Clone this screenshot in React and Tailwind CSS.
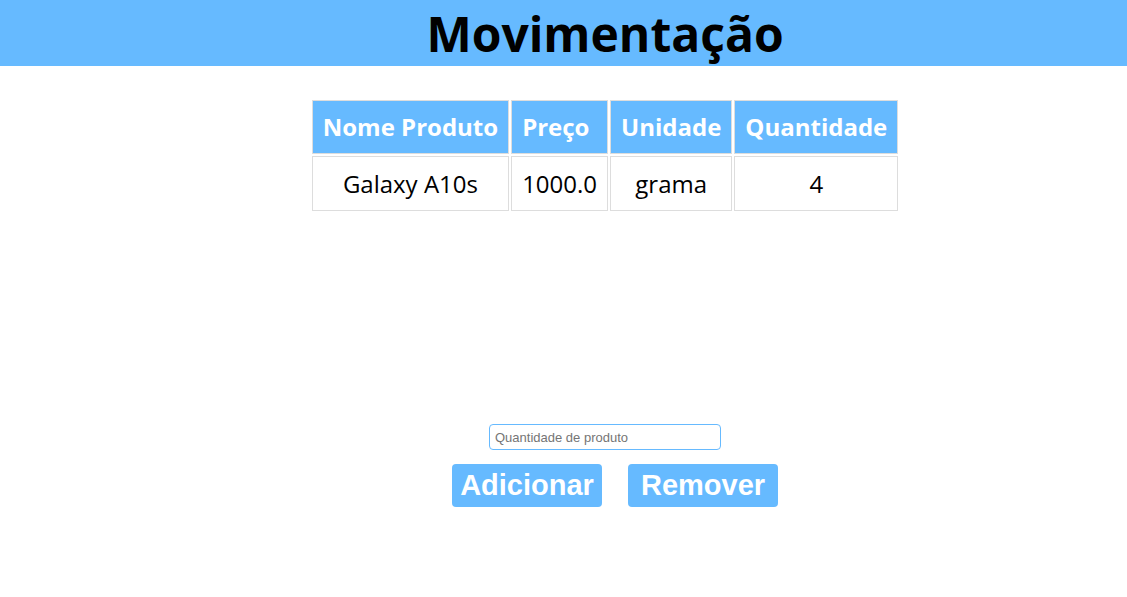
import React from 'react';

const rows = [{ nome: 'Galaxy A10s', preco: '1000.0', unidade: 'grama', quantidade: '4' }];

const App = () => {
  return (
    <div className="min-h-[597px] bg-white font-['Open_Sans',sans-serif]">
      <header className="h-[66px] bg-[#66baff] flex items-center justify-center pl-[83px]">
        <h1 className="text-[48px] font-bold text-black leading-none mt-[2px]">Movimentação</h1>
      </header>

      <div className="flex justify-center pl-[83px] mt-[32px]">
        <table className="border-separate border-spacing-[2px] text-[24px]">
          <thead>
            <tr>
              {['Nome Produto', 'Preço', 'Unidade', 'Quantidade'].map((h) => (
                <th key={h} className="bg-[#66baff] text-white font-bold text-left border border-[#dddddd] px-[10px] py-[10px] leading-[32px]">
                  {h}
                </th>
              ))}
            </tr>
          </thead>
          <tbody>
            {rows.map((r) => (
              <tr key={r.nome}>
                <td className="border border-[#dddddd] px-[10px] py-[10px] text-center leading-[33px]">{r.nome}</td>
                <td className="border border-[#dddddd] px-[10px] py-[10px] text-center leading-[33px]">{r.preco}</td>
                <td className="border border-[#dddddd] px-[10px] py-[10px] text-center leading-[33px]">{r.unidade}</td>
                <td className="border border-[#dddddd] px-[10px] py-[10px] text-center leading-[33px]">{r.quantidade}</td>
              </tr>
            ))}
          </tbody>
        </table>
      </div>

      <div className="flex flex-col items-center pl-[83px] mt-[211px] font-['Liberation_Sans',sans-serif]">
        <input
          type="text"
          placeholder="Quantidade de produto"
          className="w-[232px] h-[26px] border border-[#66baff] rounded-[4px] px-[5px] text-[13px] placeholder:text-[#757575] outline-none"
        />
        <div className="flex gap-[26px] mt-[14px] ml-[20px]">
          <button className="w-[150px] h-[43px] bg-[#66baff] rounded-[4px] text-white font-bold text-[29px]">Adicionar</button>
          <button className="w-[150px] h-[43px] bg-[#66baff] rounded-[4px] text-white font-bold text-[29px]">Remover</button>
        </div>
      </div>
    </div>
  );
};

export default App;
